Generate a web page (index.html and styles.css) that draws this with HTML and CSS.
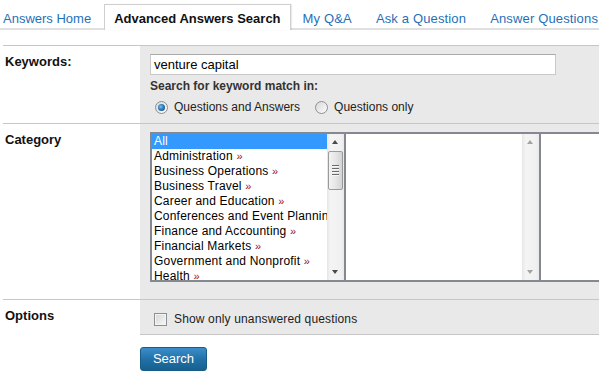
FILE: index.html
```html
<!DOCTYPE html>
<html>
<head>
<meta charset="utf-8">
<link rel="stylesheet" href="styles.css">
</head>
<body>
<nav class="tabs">
  <a class="tab first">Answers Home</a>
  <a class="tab active">Advanced Answers Search</a>
  <a class="tab">My Q&amp;A</a>
  <a class="tab">Ask a Question</a>
  <a class="tab">Answer Questions</a>
</nav>

<div class="form">
  <div class="row">
    <div class="label">Keywords:</div>
    <div class="field kw">
      <div class="input">venture capital</div>
      <div class="sub">Search for keyword match in:</div>
      <div class="radios">
        <span class="radio checked"></span><span class="rlabel">Questions and Answers</span>
        <span class="radio second"></span><span class="rlabel">Questions only</span>
      </div>
    </div>
  </div>

  <div class="row">
    <div class="label">Category</div>
    <div class="field cat">
      <div class="lists">
        <div class="box b1">
          <div class="items">
            <div class="item sel">All</div>
            <div class="item">Administration <span class="more">»</span></div>
            <div class="item">Business Operations <span class="more">»</span></div>
            <div class="item">Business Travel <span class="more">»</span></div>
            <div class="item">Career and Education <span class="more">»</span></div>
            <div class="item">Conferences and Event Planning <span class="more">»</span></div>
            <div class="item">Finance and Accounting <span class="more">»</span></div>
            <div class="item">Financial Markets <span class="more">»</span></div>
            <div class="item">Government and Nonprofit <span class="more">»</span></div>
            <div class="item">Health <span class="more">»</span></div>
          </div>
          <div class="sbar">
            <div class="arrow up"></div>
            <div class="track"><div class="thumb"><span></span><span></span><span></span><span></span></div></div>
            <div class="arrow down"></div>
          </div>
        </div>
        <div class="box b2">
          <div class="items"></div>
          <div class="sbar dis">
            <div class="arrow up"></div>
            <div class="track"></div>
            <div class="arrow down"></div>
          </div>
        </div>
        <div class="box b3">
          <div class="items"></div>
        </div>
      </div>
    </div>
  </div>

  <div class="row">
    <div class="label">Options</div>
    <div class="field opt">
      <span class="check"></span><span class="clabel">Show only unanswered questions</span>
    </div>
  </div>

  <div class="actions">
    <button class="btn">Search</button>
  </div>
</div>
</body>
</html>
```

FILE: styles.css
```css
html, body {
  margin: 0;
  padding: 0;
  overflow: hidden;
  background: #fff;
  font-family: "Liberation Sans", Arial, sans-serif;
  color: #000;
}

.tabs {
  display: flex;
  padding-top: 4px;
  height: 24px;
  border-bottom: 2px solid #e0e0e0;
}

.tab {
  display: block;
  font-size: 13px;
  line-height: 15px;
  padding: 7px 12px 2px;
  color: #1f70b8;
  white-space: nowrap;
  letter-spacing: 0.15px;
}

.tab.first {
  padding-left: 3px;
  padding-right: 13px;
  letter-spacing: 0;
}

.tab.active {
  background: #fff;
  color: #111;
  font-weight: bold;
  border: 1px solid #cfcfcf;
  border-bottom: none;
  box-shadow: 1px 0 1px rgba(0,0,0,0.08);
  padding: 6px 9px 4px;
  margin-bottom: -2px;
  letter-spacing: 0;
}

.form {
  margin: 15px 0 0 3px;
}

.row {
  display: flex;
  border-top: 1px solid #c6c6c6;
}

.label {
  width: 135px;
  flex: none;
  padding: 8px 0 0 2px;
  font-size: 13px;
  line-height: 15px;
  font-weight: bold;
  color: #111;
}

.field {
  flex: 1;
  background: #e9e9e9;
  overflow: hidden;
}

.kw {
  height: 69px;
  padding: 8px 0 0 10px;
}

.input {
  width: 401px;
  height: 19px;
  background: #fff;
  border: 1px solid #c9c9c9;
  border-top-color: #a9a9a9;
  font-size: 13px;
  line-height: 19px;
  padding-left: 3px;
  color: #000;
}

.sub {
  margin-top: 4px;
  font-size: 12px;
  line-height: 15px;
  font-weight: bold;
  color: #333;
}

.radios {
  display: flex;
  align-items: center;
  margin-top: 6px;
  padding-left: 5px;
  font-size: 12px;
  line-height: 14px;
  color: #222;
}

.radio {
  width: 11px;
  height: 11px;
  border-radius: 50%;
  border: 1px solid #8f8f8f;
  background: linear-gradient(135deg, #d8d8d8, #fcfcfc);
  position: relative;
  flex: none;
}

.radio.checked::after {
  content: "";
  position: absolute;
  left: 2px;
  top: 2px;
  width: 7px;
  height: 7px;
  border-radius: 50%;
  background: radial-gradient(circle at 40% 40%, #7ec3f2 0, #2b7bc0 45%, #0e3f77 100%);
}

.radio.second {
  margin-left: 15px;
}

.rlabel {
  margin-left: 6px;
}

.cat {
  padding: 8px 0 17px 10px;
}

.lists {
  display: flex;
  height: 150px;
  width: 600px;
}

.box {
  display: flex;
  border: 2px solid #848891;
  background: #fff;
  flex: none;
}

.b1 { width: 192px; }
.b2 { width: 193px; border-left: none; }
.b3 { width: 200px; border-left: none; }

.items {
  flex: 1;
  overflow: hidden;
  white-space: nowrap;
  font-size: 12px;
  line-height: 15px;
  letter-spacing: 0.2px;
}

.item {
  padding-left: 2px;
  height: 15px;
}

.item.sel {
  background: #3399ff;
  color: #fff;
}

.more {
  color: #9a1010;
  font-size: 11px;
}

.sbar {
  width: 17px;
  flex: none;
  display: flex;
  flex-direction: column;
  background: linear-gradient(90deg, #e6e6e6, #f4f4f4 20%, #f1f1f1 80%, #e9e9e9);
}

.arrow {
  height: 17px;
  flex: none;
  position: relative;
}

.arrow::after {
  content: "";
  position: absolute;
  left: 5px;
  width: 0;
  height: 0;
  border-left: 3.5px solid transparent;
  border-right: 3.5px solid transparent;
}

.arrow.up::after {
  top: 6px;
  border-bottom: 4px solid #4a4a4a;
}

.arrow.down::after {
  top: 7px;
  border-top: 4px solid #4a4a4a;
}

.dis .arrow.up::after { border-bottom-color: #a3a3a3; }
.dis .arrow.down::after { border-top-color: #a3a3a3; }

.track {
  flex: 1;
  position: relative;
}

.thumb {
  position: absolute;
  left: 1px;
  right: 1px;
  top: 0;
  height: 39px;
  border: 1px solid #9a9a9a;
  border-radius: 2px;
  background: linear-gradient(90deg, #f3f3f3, #e6e6e6 50%, #d4d4d4);
  box-sizing: border-box;
  display: flex;
  flex-direction: column;
  align-items: center;
  justify-content: center;
  gap: 1px;
}

.thumb span {
  width: 7px;
  height: 1px;
  background: #6a6a6a;
  border-bottom: 1px solid #f6f6f6;
}

.opt {
  height: 35px;
  border-bottom: 1px solid #c6c6c6;
  display: flex;
  align-items: flex-start;
  padding: 13px 0 0 14px;
  box-sizing: border-box;
  font-size: 12px;
  line-height: 13px;
  color: #222;
  letter-spacing: 0.15px;
}

.check {
  width: 11px;
  height: 11px;
  border: 1px solid #8e8f8f;
  background: linear-gradient(135deg, #d6d6d6, #f8f8f8);
  box-shadow: inset 0 0 0 1px #f4f4f4;
  flex: none;
}

.clabel {
  margin-left: 7px;
}

.actions {
  padding: 12px 0 0 137px;
}

.btn {
  display: block;
  width: 67px;
  height: 24px;
  margin: 0;
  padding: 0;
  border: 1px solid #1a5c88;
  border-radius: 3px;
  background: linear-gradient(#3a8ecb, #1f6fa6 55%, #17608f);
  color: #fff;
  font-family: "Liberation Sans", Arial, sans-serif;
  font-size: 13px;
  line-height: 22px;
}
```
